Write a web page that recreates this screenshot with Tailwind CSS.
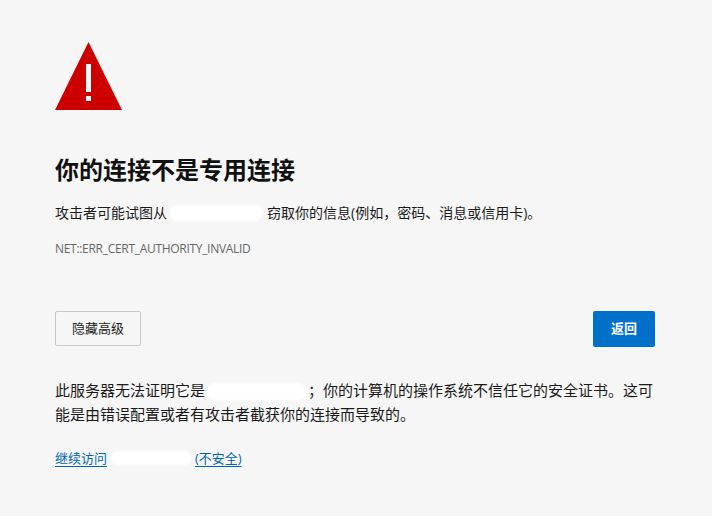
<!DOCTYPE html>
<html lang="zh-CN">
  <head>
    <meta charset="UTF-8" />
    <title>隐私错误</title>
    <script src="https://cdn.jsdelivr.net/npm/@tailwindcss/browser@4"></script>
  </head>
  <body class="bg-[#f6f6f6] text-[#1a1a1a] font-['Open_Sans','Noto_Sans_CJK_SC',sans-serif] h-[516px] overflow-hidden">
    <div class="w-[600px] ml-[55px] pt-[42px]">
      <!-- warning icon -->
      <svg class="block" width="67" height="68" viewBox="0 0 67 68">
        <path d="M33.5 0 L67 68 L0 68 Z" fill="#cd0000" />
        <rect x="31" y="22" width="5" height="28" fill="#f6f6f6" />
        <rect x="31" y="54" width="5" height="5" fill="#f6f6f6" />
      </svg>

      <h1 class="mt-[42px] text-[24px] leading-[36px] font-bold text-[#111]">你的连接不是专用连接</h1>

      <p class="mt-[15px] text-[14px] leading-[20px] flex items-center">
        <span>攻击者可能试图从</span>
        <span class="w-[93px] h-[16px] ml-[3px] mr-[4px] bg-white rounded-full blur-[1px]"></span>
        <span>窃取你的信息(例如，密码、消息或信用卡)。</span>
      </p>

      <p class="mt-[17px] text-[12px] leading-[18px] tracking-[-0.3px] text-[#666]">NET::ERR_CERT_AUTHORITY_INVALID</p>

      <div class="mt-[53px] flex justify-between">
        <button class="w-[86px] h-[35px] border border-[#c8c8c8] rounded-[2px] text-[13px] text-[#1a1a1a]">隐藏高级</button>
        <button class="w-[62px] h-[36px] bg-[#0070c9] rounded-[2px] text-[13px] font-bold text-white">返回</button>
      </div>

      <p class="mt-[31px] text-[15px] leading-[24px]">此服务器无法证明它是<span class="inline-block w-[100px] h-[17px] ml-[2px] mr-[1px] align-middle bg-white rounded-full blur-[1px]"></span>；你的计算机的操作系统不信任它的安全证书。这可<br />能是由错误配置或者有攻击者截获你的连接而导致的。</p>

      <p class="mt-[23px] text-[13px] leading-[18px]">
        <a class="inline-flex items-center text-[#0066b4] underline underline-offset-[3px]" href="#">继续访问<span class="inline-block w-[80px] h-[14px] mx-[4px] bg-white rounded-full blur-[1px]"></span>(不安全)</a>
      </p>
    </div>
  </body>
</html>
